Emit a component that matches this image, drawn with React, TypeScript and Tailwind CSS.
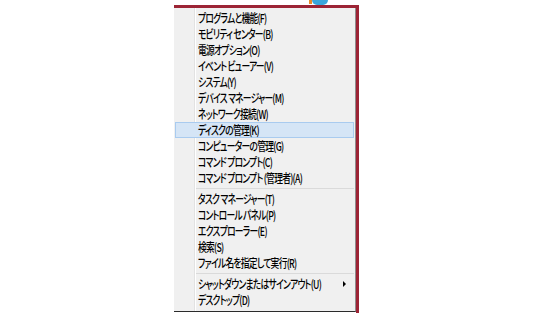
import React from 'react';

type Entry = { label: string } | 'sep';

const items: Entry[] = [
  { label: 'プログラムと機能(F)' },
  { label: 'モビリティ センター(B)' },
  { label: '電源オプション(O)' },
  { label: 'イベント ビューアー(V)' },
  { label: 'システム(Y)' },
  { label: 'デバイス マネージャー(M)' },
  { label: 'ネットワーク接続(W)' },
  { label: 'ディスクの管理(K)' },
  { label: 'コンピューターの管理(G)' },
  { label: 'コマンド プロンプト(C)' },
  { label: 'コマンド プロンプト (管理者)(A)' },
  'sep',
  { label: 'タスク マネージャー(T)' },
  { label: 'コントロール パネル(P)' },
  { label: 'エクスプローラー(E)' },
  { label: '検索(S)' },
  { label: 'ファイル名を指定して実行(R)' },
  'sep',
  { label: 'シャットダウンまたはサインアウト(U)' },
  { label: 'デスクトップ(D)' },
];

const App: React.FC = () => {
  return (
    <div className="w-[535px] h-[320px] bg-white overflow-hidden relative flex items-start pl-[174px] pt-[5px]">
      {/* taskbar icon peeking at the top */}
      <div className="absolute left-[312px] top-0 w-[16px] h-[5px] rounded-b-full bg-[#3aa6dc]" />
      <div className="absolute left-[309px] top-0 w-[3px] h-[4px] bg-[#e98a2a]" />

      {/* desktop showing above and right of the menu */}
      <div className="flex flex-col shrink-0">
        <div className="h-[3px] w-[185px] bg-[#9c2435]" />
        <div className="flex">
          <div
            className="shrink-0 overflow-hidden flex flex-col w-[182px] h-[304px] pt-[2px] border-r border-r-[#8e8e8e] border-b border-b-[#2b2b2b] bg-[#f0f0f0] bg-[linear-gradient(to_right,transparent_20px,#e2e2e2_20px,#e2e2e2_21px,#ffffff_21px,#ffffff_22px,transparent_22px)] text-[12px] font-medium [font-feature-settings:'palt'] tracking-[-1px]"
            style={{ fontFamily: '"Noto Sans CJK JP", "Noto Sans", sans-serif' }}
          >
            {items.map((it, i) =>
              it === 'sep' ? (
                <div key={i} className="h-[5px] shrink-0 flex items-center pl-[22px] pr-[1px]">
                  <div className="w-full h-px bg-[#dadada]" />
                </div>
              ) : (
                <div
                  key={i}
                  className={`h-[16px] shrink-0 flex items-center mx-[1px] pl-[23px] pr-[8px] ${
                    it.label === 'ディスクの管理(K)' ? 'bg-[#d5e5f6] shadow-[inset_0_0_0_1px_#a9cbef]' : ''
                  }`}
                >
                  <span className="flex-1 min-w-0 leading-none whitespace-nowrap text-[#000] origin-left scale-x-[0.73]">
                    {it.label}
                  </span>
                  {it.label.startsWith('シャットダウン') && (
                    <span className="shrink-0 w-0 h-0 border-y-[3px] border-y-transparent border-l-[3px] border-l-black" />
                  )}
                </div>
              )
            )}
          </div>
          <div className="w-[3px] h-[305px] bg-[#9c2435]" />
        </div>
      </div>
    </div>
  );
};

export default App;
